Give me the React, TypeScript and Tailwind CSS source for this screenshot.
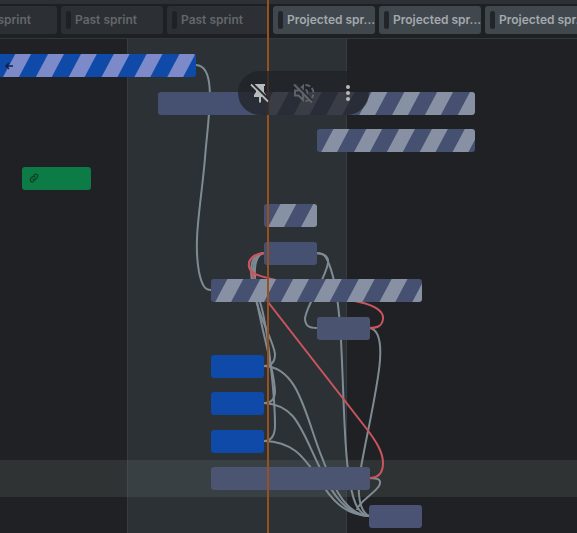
import React from "react";

type Sprint = { name: string; projected: boolean };

const sprints: Sprint[] = [
  { name: "Past sprint", projected: false },
  { name: "Past sprint", projected: false },
  { name: "Past sprint", projected: false },
  { name: "Projected spr...", projected: true },
  { name: "Projected spr...", projected: true },
  { name: "Projected spr...", projected: true },
];

const blueStripes =
  "bg-[repeating-linear-gradient(118deg,#104aa8_0px,#104aa8_14px,#7d8aca_15px,#7d8aca_28px,#104aa8_29px)]";
const greyStripes =
  "bg-[repeating-linear-gradient(118deg,#465172_0px,#465172_14px,#8891a4_15px,#8891a4_28px,#465172_29px)]";

type Row = { bar?: string; icon?: "arrow" | "link"; highlighted?: boolean };

const rows: Row[] = [
  { bar: `-ml-[34px] w-[230px] ${blueStripes}`, icon: "arrow" },
  {
    bar: "ml-[158px] w-[317px] bg-[linear-gradient(90deg,#465172_110px,transparent_110px),repeating-linear-gradient(118deg,#465172_0px,#465172_14px,#8891a4_15px,#8891a4_28px,#465172_29px)]",
  },
  { bar: `ml-[317px] w-[158px] ${greyStripes}` },
  { bar: "ml-[22px] w-[69px] bg-[#0c7b45]", icon: "link" },
  { bar: `ml-[264px] w-[53px] ${greyStripes}` },
  { bar: "ml-[264px] w-[53px] bg-[#465172]" },
  { bar: `ml-[211px] w-[211px] ${greyStripes}` },
  { bar: "ml-[317px] w-[53px] bg-[#4a5470]" },
  { bar: "ml-[211px] w-[53px] bg-[#104aa8]" },
  { bar: "ml-[211px] w-[53px] bg-[#104aa8]" },
  { bar: "ml-[211px] w-[53px] bg-[#104aa8]" },
  { bar: "ml-[211px] w-[159px] bg-[#4b5470]", highlighted: true },
  { bar: "ml-[369px] w-[53px] bg-[#4a5373]" },
];

const greyLinks = [
  "M196 65C218 66 208 118 205 158C201 205 193 240 199 272C202 286 205 290 211 290",
  "M264 253C247 254 250 276 255 296C260 320 273 340 275 354C275 362 271 366 264 366",
  "M264 253C249 255 252 280 257 302C264 340 274 370 275 391C275 399 271 403 264 403",
  "M264 253C251 256 254 284 260 302C268 326 275 400 275 425C275 436 271 441 264 441",
  "M316 253C325 253 326 257 329 264C336 281 339 305 341 340C344 400 344 440 348 470C352 500 357 514 369 516",
  "M316 253C327 254 330 258 327 267C321 287 308 302 305 318C305 326 309 328 317 328",
  "M369 328C380 329 381 345 380 360C378 390 363 450 359 480C358 496 359 511 369 516",
  "M264 366C300 367 306 420 323 460C337 497 349 514 369 516",
  "M264 403C297 405 301 430 321 470C333 496 347 515 369 516",
  "M264 441C296 442 305 460 319 479C331 500 345 515 369 516",
  "M369 478C379 478 382 480 379 486C373 495 358 502 357 510",
];

const blockedLinks = [
  "M264 253C253 254 248 260 249 266C251 276 263 276 275 280C305 288 345 299 359 302C374 305 384 311 383 319C382 327 376 328 369 328",
  "M264 253C253 254 248 260 249 266C251 276 262 290 268 302L366 428C376 441 383 452 383 463C383 473 378 478 369 478",
];

function SprintTab({ name, projected }: Sprint) {
  return (
    <li
      className={`flex h-7 w-[102px] shrink-0 items-center gap-1 rounded-[3px] pl-[5px] ${
        projected ? "bg-[#40474d] text-[#a4a9ae]" : "bg-[#2c3035] text-[#63676a]"
      }`}
    >
      <span className={`h-[18px] w-[5px] shrink-0 rounded-sm ${projected ? "bg-[#22262b]" : "bg-[#1e2126]"}`} />
      <span className="text-[12px] leading-4 font-semibold whitespace-nowrap">{name}</span>
    </li>
  );
}

function BarIcon({ kind }: { kind: "arrow" | "link" }) {
  if (kind === "arrow") {
    return (
      <svg className="ml-[38px] h-3 w-3" viewBox="0 0 12 12" fill="none" stroke="#10204f" strokeWidth="1.6">
        <path d="M9 6H2M5 3L2 6l3 3" />
      </svg>
    );
  }
  return (
    <svg className="ml-1.5 h-3 w-3" viewBox="0 0 12 12" fill="none" stroke="#0a4428" strokeWidth="1.3" strokeLinecap="round">
      <path d="M5 7a2 2 0 0 0 2.9 0l1.5-1.6a2 2 0 0 0-2.8-2.8l-.8.8M7 5a2 2 0 0 0-2.9 0L2.6 6.6a2 2 0 0 0 2.8 2.8l.8-.8" />
    </svg>
  );
}

function FloatingControls() {
  return (
    <div className="absolute top-[71px] left-[238px] z-20 flex h-11 w-[131px] items-center justify-between rounded-full bg-[#202226]/75 px-2.5">
      <button type="button" aria-label="Unpin" className="flex h-6 w-6 items-center justify-center">
        <svg className="h-6 w-6" viewBox="0 0 24 24">
          <path fill="#b8bbbb" d="M7 3h10v2h-1v6l2 3v2h-5v5l-1 1-1-1v-5H6v-2l2-3V5H7z" />
          <path stroke="#25282b" strokeWidth="2" d="M4.5 2.5l17 17" />
          <path stroke="#b8bbbb" strokeWidth="1.8" d="M3 3.5l17 17" />
        </svg>
      </button>
      <button type="button" aria-label="Unmute" className="flex h-6 w-6 items-center justify-center">
        <svg className="h-6 w-6" viewBox="0 0 24 24" fill="none" stroke="#62656b" strokeWidth="1.8">
          <path d="M3 9.5h3.5L11 5v14l-4.5-4.5H3z" />
          <path d="M13.5 4a8 8 0 0 1 0 16" strokeDasharray="5 2" />
          <path d="M13.5 8.5a4 4 0 0 1 0 7" />
          <path stroke="#292c32" strokeWidth="2" d="M3.5 2.5l17 17" />
          <path d="M2 3.5l18 18" />
        </svg>
      </button>
      <button type="button" aria-label="More options" className="flex h-6 w-6 items-center justify-center">
        <svg className="h-6 w-6" viewBox="0 0 24 24" fill="#b8bbbb">
          <circle cx="13" cy="6" r="2" />
          <circle cx="13" cy="12" r="2" />
          <circle cx="13" cy="18" r="2" />
        </svg>
      </button>
    </div>
  );
}

export default function App() {
  return (
    <main className="relative min-h-screen w-full overflow-hidden bg-[#1f2124] font-['Inter',sans-serif]">
      <div className="absolute top-[39px] bottom-0 left-[127px] w-[220px] border-x border-[#363c41] bg-[#2b3135]" />

      <header className="relative h-[39px] border-b border-[#34383c] bg-[#1e2124]">
        <div className="h-1 bg-[#2d3035]" />
        <ul className="-ml-[45px] flex gap-1 pt-0.5">
          {sprints.map((sprint, i) => (
            <SprintTab key={i} {...sprint} />
          ))}
        </ul>
      </header>

      <section aria-label="Timeline" className="relative h-[494px] overflow-hidden pt-2">
        <div className="grid h-[488px] auto-rows-fr">
          {rows.map((row, i) => (
            <div key={i} className={`flex items-center ${row.highlighted ? "bg-[#8f9a92]/15" : ""}`}>
              <div className={`relative z-10 flex h-[23px] shrink-0 items-center rounded-[3px] ${row.bar}`}>
                {row.icon && <BarIcon kind={row.icon} />}
              </div>
            </div>
          ))}
        </div>
      </section>

      <svg
        className="pointer-events-none absolute top-0 left-0 h-[533px] w-[577px]"
        viewBox="0 0 577 533"
        fill="none"
        strokeWidth="2"
        aria-hidden="true"
      >
        <g stroke="#7f8b93">
          {greyLinks.map((d) => (
            <path key={d} d={d} />
          ))}
        </g>
        <g stroke="#cb555e">
          {blockedLinks.map((d) => (
            <path key={d} d={d} />
          ))}
        </g>
      </svg>

      <div className="absolute top-0 bottom-0 left-[267px] z-10 w-0.5 bg-[#98501f]" />
      <FloatingControls />
    </main>
  );
}
